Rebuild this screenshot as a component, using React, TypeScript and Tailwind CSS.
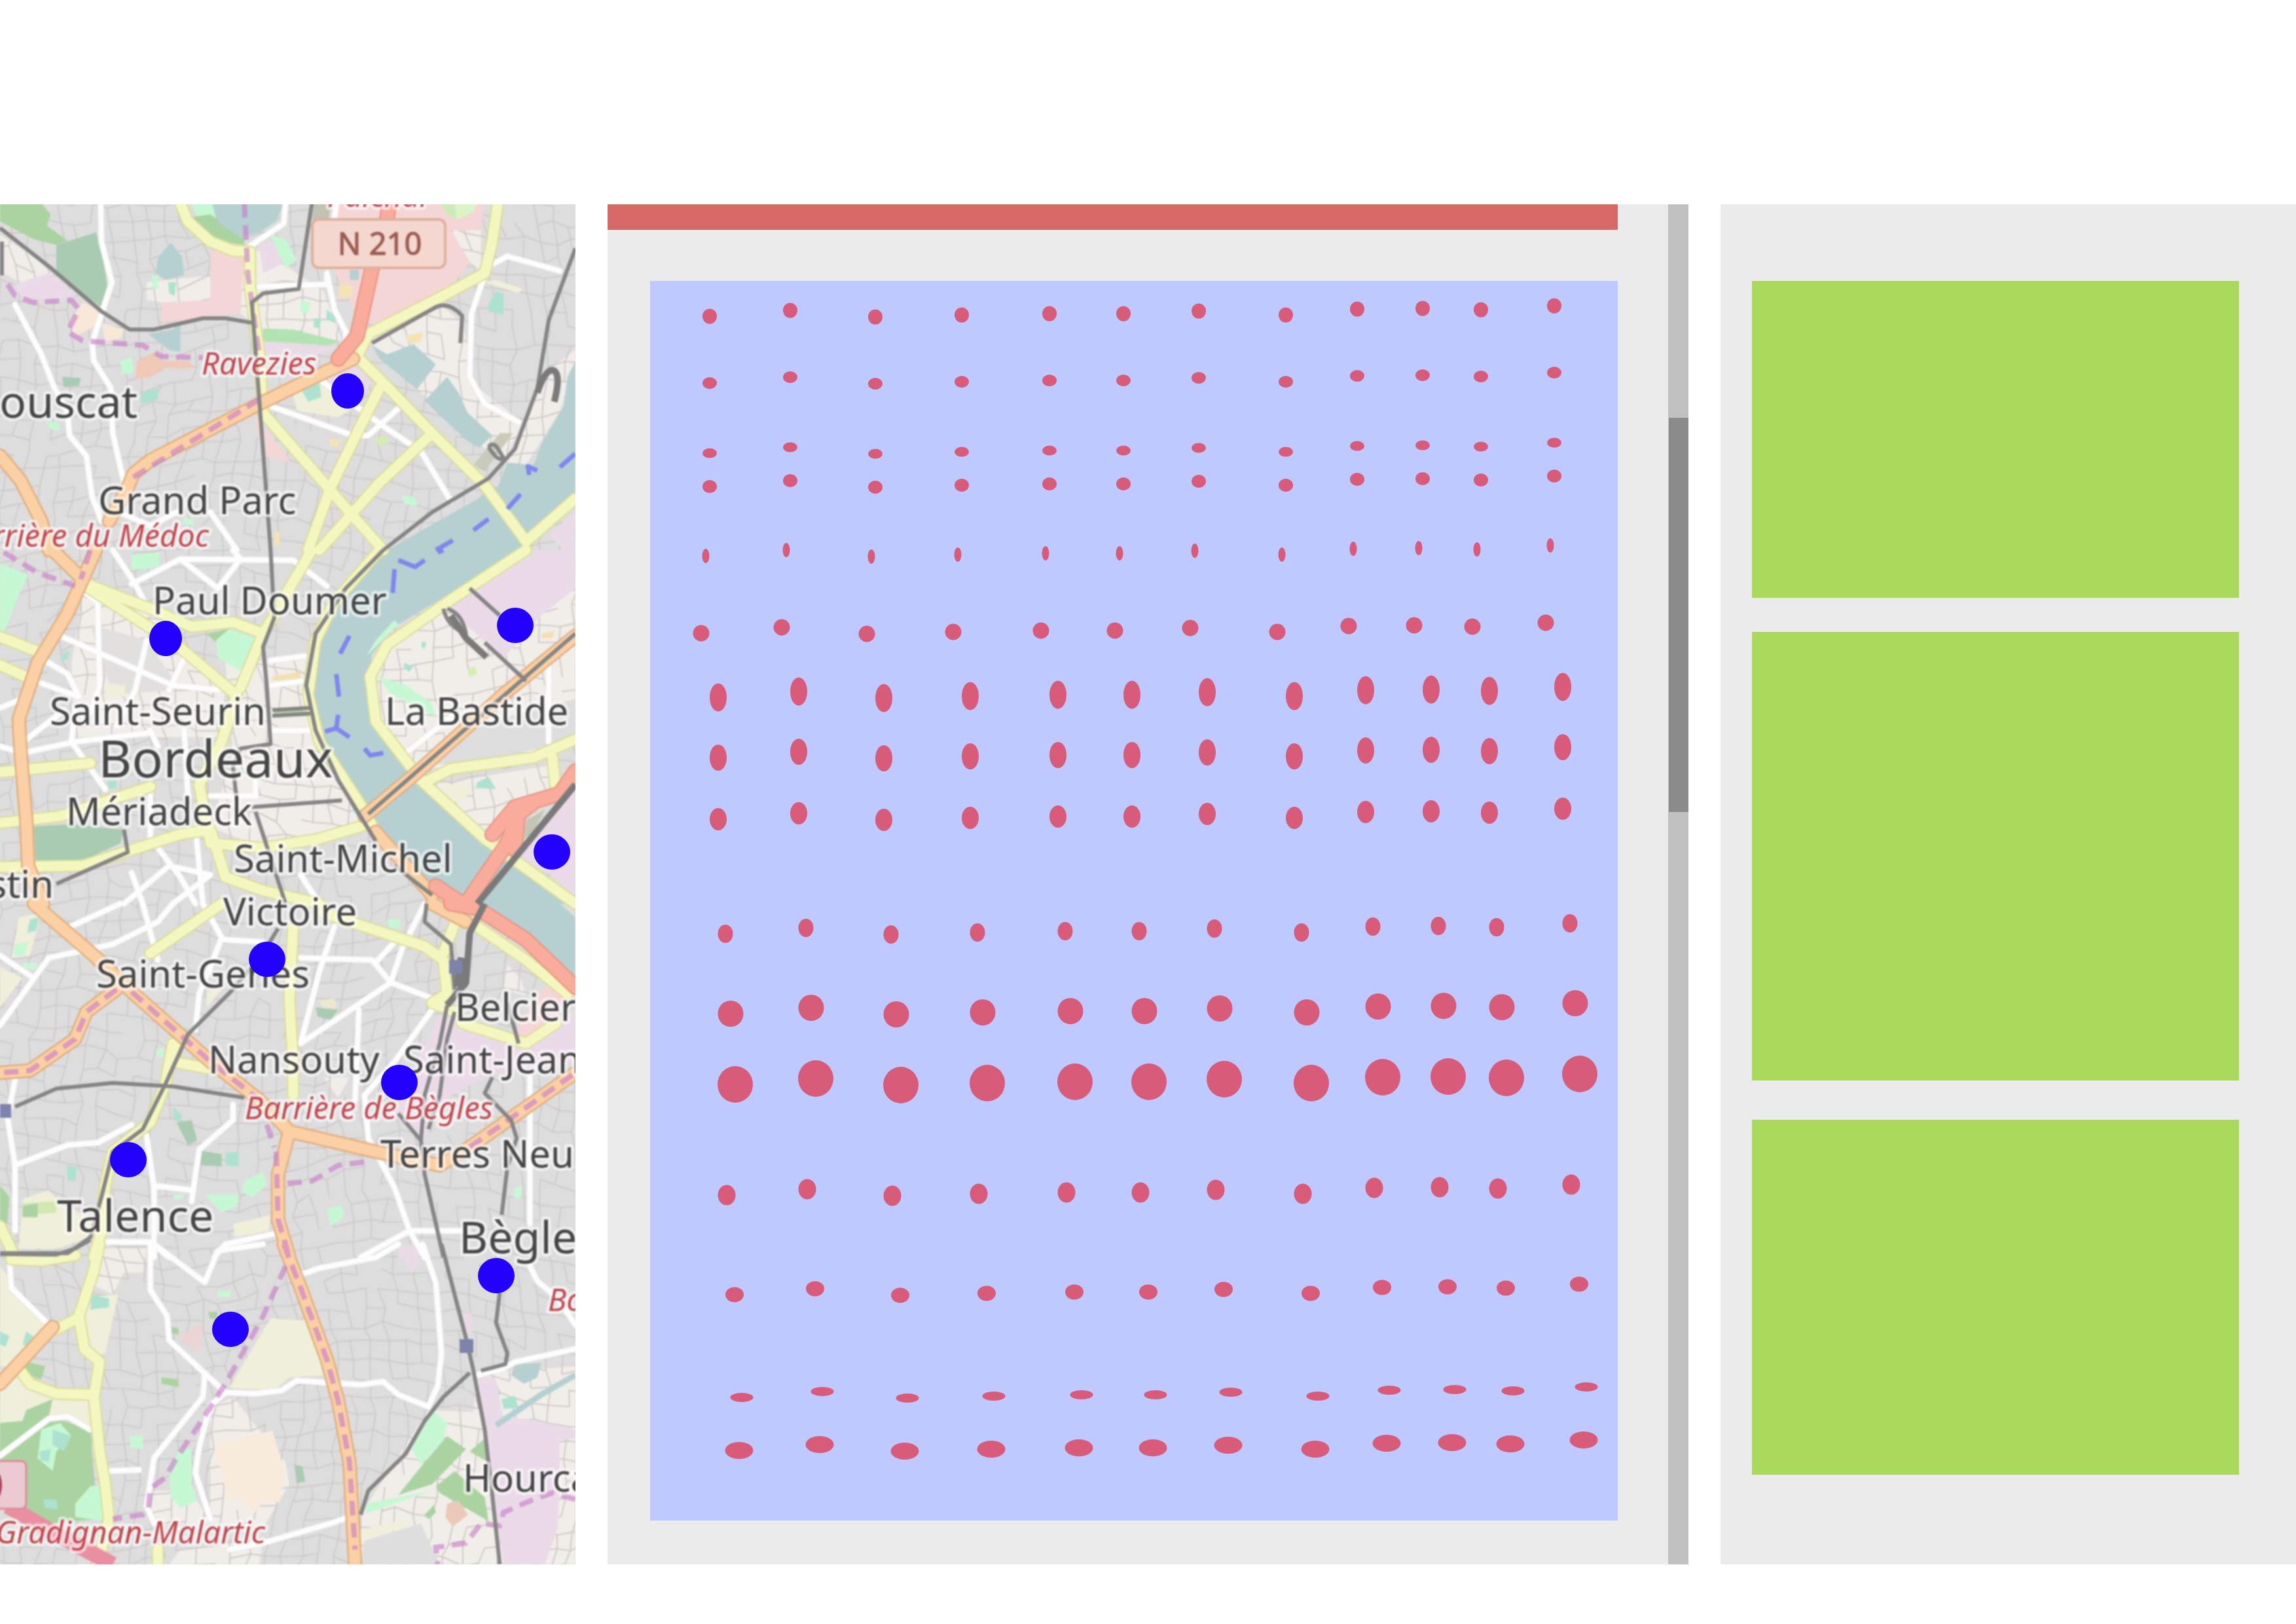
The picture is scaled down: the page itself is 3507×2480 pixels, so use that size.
import React from "react";

type Shape = { tile: number; fill: string; d: string };
type Line = { tile: number; d: string };

// The map is surveyed in four stacked sheets, each with its own grid.
const SHEETS = [
  { y: -12, sx: 0.57398, sy: 0.34439 },
  { y: 528, sx: 0.57398, sy: 0.34439 },
  { y: 1068, sx: 0.57398, sy: 0.34439 },
  { y: 1588, sx: 0.57398, sy: 0.3331 },
];

const project = (tile: number, d: string) => {
  const s = SHEETS[tile];
  return d.replace(/(-?\d+) (-?\d+)/g, (_, x, y) =>
    `${(Number(x) * s.sx).toFixed(1)} ${(Number(y) * s.sy + s.y).toFixed(1)}`,
  );
};

const WOOD = "#abd3a1";
const FOREST = "#a9cbb1";
const PARK = "#c7f8d4";
const WATER = "#b6d0d2";
const BEIGE = "#f1eee9";
const RAILYARD = "#ebdbe8";
const RETAIL = "#f5d6d6";
const FARM = "#efefda";
const TEAL = "#aee2d0";

const sheet = (tile: number, items: [string, string][]): Shape[] =>
  items.map(([fill, d]) => ({ tile, fill, d }));

const AREAS: Shape[] = [
  ...sheet(0, [
    [BEIGE, "M0 170L100 280L160 380L60 390L0 330Z"],
    [WOOD, "M0 30L110 30L135 80L125 130L180 195L150 215L90 190L0 110Z"],
    [FOREST, "M150 215L255 160L270 230L285 400L270 490L150 350Z"],
    [RAILYARD, "M40 390L130 340L190 420L200 450L60 460Z"],
    [BEIGE, "M390 380L560 350L640 240L700 240L860 420L910 640L700 590L640 520L390 460Z"],
    [PARK, "M510 30L570 30L600 130L650 190L590 200L540 150Z"],
    [WOOD, "M515 90L560 80L650 185L650 215L590 200L540 150Z"],
    [WATER, "M565 30L755 30L735 110L690 160L640 180L600 140L575 100Z"],
    [WATER, "M420 270L455 205L485 270L490 350L440 370L415 340Z"],
    [PARK, "M405 350L420 350L420 410L405 405Z"],
    [TEAL, "M447 380L468 380L465 440L450 430Z"],
    [RETAIL, "M880 30L1290 30L1280 150L1200 150L1250 290L1200 400L1000 560L960 560L890 330Z"],
    [BEIGE, "M1200 150L1280 150L1280 330L1250 290Z"],
    [RETAIL, "M560 240L650 240L640 520L430 560L430 470L560 460Z"],
    ["#cdebb8", "M1170 30L1210 30L1215 105L1190 80Z"],
    ["#dcf3c6", "M1210 30L1270 30L1260 70L1215 105Z"],
    ["#c0c3b2", "M835 30L880 30L875 100L830 130Z"],
    [RAILYARD, "M690 210L750 200L760 290L700 340Z"],
    [PARK, "M720 170L760 190L790 280L760 320Z"],
    [PARK, "M800 460L825 470L820 520L798 510Z"],
    [TEAL, "M835 540L855 540L850 585L835 580ZM870 500L895 540L890 560L868 545Z"],
    ["#f6e3b5", "M905 385L940 400L935 440L900 455Z"],
    [WATER, "M930 325L955 325L955 370L932 370Z"],
    ["#b3e3b3", "M700 585L780 590L900 640L880 660L700 640Z"],
    [RAILYARD, "M700 645L900 670L830 710L700 700Z"],
    [RAILYARD, "M860 760L930 740L990 820L960 900L880 830Z"],
    [BEIGE, "M980 640L1180 490L1230 560L1250 700L1250 820L1390 1000L1340 1180L1200 1000Z"],
    ["#f6e3b5", "M1080 620L1125 600L1120 645L1090 655Z"],
    [WATER, "M990 660L1030 700L1100 655L1160 745L1110 855L1010 720Z"],
    [WATER, "M1130 905L1190 800L1220 870L1245 960L1310 1060L1275 1115L1240 1080Z"],
    [BEIGE, "M1531 680L1531 760L1490 950L1430 1110L1400 1190L1350 1180L1400 1000L1430 850L1450 780Z"],
    [WATER, "M1531 730L1510 800L1500 930L1440 1100L1420 1190L1350 1180L1325 1290L1030 1568L1390 1568L1531 1320Z"],
    [RAILYARD, "M1531 1400L1460 1500L1500 1568L1531 1568Z"],
    ["#c9cbba", "M1330 1050L1365 1050L1290 1220L1260 1190Z"],
    [FARM, "M780 880L850 830L940 940L900 980L790 950Z"],
    [TEAL, "M800 850L850 830L855 890L820 910Z"],
    [TEAL, "M1300 480L1320 420L1340 430L1340 525L1300 510Z"],
    [FARM, "M1290 380L1320 370L1390 410L1380 430Z"],
    [TEAL, "M375 870L420 850L420 900L375 920Z"],
    [PARK, "M320 730L350 715L355 780L325 790ZM125 1000L155 1000L160 1040L130 1030Z"],
    [FOREST, "M165 800L215 805L210 840L170 845Z"],
    [RETAIL, "M675 960L775 1180L700 1150Z"],
    ["#f8e8d8", "M220 470L260 500L270 560L200 620L185 560ZM270 560L330 590L320 630L280 640Z"],
    ["#efc9b5", "M365 730L410 690L430 730L500 730L520 760L440 760L400 800L360 810Z"],
    [WATER, "M395 610L460 590L480 560L480 690L450 680Z"],
    ["#d3edb3", "M995 1070L1030 1065L1035 1090L1010 1110Z"],
    [PARK, "M1070 1325L1105 1335L1110 1375L1075 1360ZM485 1425L515 1430L515 1460L490 1455Z"],
    ["#f6e3b5", "M875 1075L910 1080L900 1110L878 1105ZM730 1490L745 1490L745 1540L730 1550Z"],
  ]),
  ...sheet(1, [
    [BEIGE, "M220 210L420 290L500 440L600 620L580 830L200 830L190 500Z"],
    [BEIGE, "M600 500L820 480L840 880L960 1200L700 1320L560 1230L620 900Z"],
    ["#e2e0df", "M240 330L390 400L480 620L300 640Z"],
    [BEIGE, "M1310 60L1390 0L1531 0L1531 840L1280 960L1110 970L1000 720L1000 500L1060 360Z"],
    ["#dedddd", "M1260 780L1531 660L1531 830L1280 950L1150 950Z"],
    [WATER, "M1010 0L1390 0L1050 340L990 460L980 600L1000 720L1070 950L1180 1150L1350 1340L1531 1540L1531 1568L1240 1568L1130 1480L960 1210L850 880L835 620L860 350L920 180Z"],
    [PARK, "M0 60L75 110L50 200L10 370L0 370Z"],
    [PARK, "M350 20L425 10L425 75L350 90Z"],
    [WOOD, "M550 370L610 350L600 410L575 410Z"],
    [PARK, "M575 400L610 350L680 390L640 535L580 480Z"],
    [FOREST, "M90 1225L190 1215L330 1240L320 1300L230 1370L95 1390Z"],
    [FARM, "M280 590L335 600L330 650L280 645Z"],
    [TEAL, "M165 460L185 445L180 485L160 490ZM285 1020L310 1020L310 1055L290 1060Z"],
    [RAILYARD, "M1280 130L1420 0L1531 0L1531 170L1440 290L1340 480L1190 260L1240 180Z"],
    [RAILYARD, "M1531 1000L1531 1540L1460 1430L1380 1370Z"],
    [BEIGE, "M1150 1040L1480 950L1460 1100L1350 1150L1300 1280L1200 1170Z"],
    [FARM, "M1180 1040L1250 1040L1240 1110L1200 1120Z"],
    [TEAL, "M1270 1030L1300 1005L1320 1060L1265 1055Z"],
    [PARK, "M1050 310L1060 330L1000 430L975 470L1000 400Z"],
    [PARK, "M1005 560L1080 600L1150 680L1160 740L1040 640Z"],
    ["#d3edb3", "M1245 530L1262 515L1270 545L1250 565Z"],
    [TEAL, "M1122 405L1135 410L1130 440L1122 430ZM1075 500L1100 515L1090 540L1075 525Z"],
    ["#f4dfb2", "M725 560L800 540L800 570L725 580ZM1440 370L1475 360L1470 390L1445 392Z"],
    ["#b9d9a8", "M730 712L815 712L815 728L730 728Z"],
    ["#c3c6b4", "M1400 1200L1450 1150L1420 1250L1395 1280Z"],
  ]),
  ...sheet(2, [
    [WATER, "M1270 0L1490 0L1531 60L1531 350L1400 150Z"],
    [RAILYARD, "M1170 490L1280 520L1400 640L1531 470L1531 700L1300 760L1200 850L1130 1040L1040 930L1110 700Z"],
    [RETAIL, "M1450 370L1520 410L1420 620L1370 590L1390 500Z"],
    [BEIGE, "M1350 270L1385 330L1400 410L1340 380ZM860 770L930 770L900 860Z"],
    [FARM, "M0 280L60 330L0 460ZM50 60L110 40L80 230L30 240ZM550 390L590 380L550 460Z"],
    [TEAL, "M80 70L105 60L95 120L72 130Z"],
    [PARK, "M40 180L75 170L65 230L35 230ZM60 260L100 265L95 290L65 290ZM1030 70L1065 70L1065 110L1035 105Z"],
    [FOREST, "M840 460L900 470L880 515L845 500Z"],
    ["#ece8d0", "M850 430L890 420L895 460L860 465Z"],
    [FOREST, "M470 970L510 960L525 1050L500 1070Z"],
    [TEAL, "M460 900L485 940L480 970L462 950Z"],
    [FOREST, "M530 1095L590 1110L590 1165L535 1160Z"],
    [TEAL, "M600 1105L635 1100L635 1165L600 1160ZM178 1160L205 1170L200 1230L180 1230Z"],
    [PARK, "M545 1290L635 1290L630 1340L590 1370Z"],
    [PARK, "M650 1230L700 1190L710 1250L670 1300L645 1280Z"],
    [PARK, "M870 1350L910 1340L915 1390L880 1430ZM1370 1260L1390 1250L1385 1310L1365 1300Z"],
    [PARK, "M415 650L435 640L435 680L418 680ZM460 1290L490 1290L485 1310L465 1310Z"],
    [FARM, "M60 1310L130 1270L160 1330L250 1400L240 1480L150 1530L50 1530Z"],
    ["#d2e8b0", "M60 1330L150 1320L150 1370L60 1380Z"],
    [WOOD, "M60 1340L100 1330L100 1390L60 1390ZM0 1250L25 1300L20 1420L0 1400Z"],
    [FARM, "M620 1420L720 1380L715 1450L625 1480Z"],
    [RAILYARD, "M1060 1530L1100 1510L1115 1568L1060 1568Z"],
  ]),
  ...sheet(3, [
    [FARM, "M0 100L130 390L30 560L0 560Z"],
    [BEIGE, "M280 20L390 20L380 130L330 130L300 230L250 190Z"],
    [FARM, "M250 240L315 230L280 500L230 520L220 330Z"],
    [TEAL, "M245 230L290 250L290 290L240 300ZM0 400L25 420L15 470L0 460ZM70 400L95 430L80 470L60 460Z"],
    [FARM, "M0 590L240 700L240 840L150 790L0 950Z"],
    [WOOD, "M50 530L120 560L110 620L60 590Z"],
    [FARM, "M720 340L820 350L880 600L770 610L730 670L610 660L650 540Z"],
    [WOOD, "M0 820L60 810L70 760L140 710L130 790L240 850L260 1260L130 1280L0 1200Z"],
    [PARK, "M110 850L160 820L190 880L150 950L140 1040L100 980Z"],
    [TEAL, "M140 850L190 880L170 950L140 920ZM105 950L135 940L130 1000L108 990ZM115 1170L150 1170L155 1215L120 1210Z"],
    [PARK, "M240 1110L280 1100L280 1270L200 1250L200 1190Z"],
    [BEIGE, "M400 1130L450 1130L480 1210L525 1175L560 1280L400 1290Z"],
    [BEIGE, "M560 750L620 700L680 830L760 1000L770 1100L700 1300L560 1280Z"],
    ["#f9ebdc", "M570 920L725 855L760 1050L745 1180L700 1180L680 1230L640 1170L605 1160Z"],
    [PARK, "M480 935L510 940L510 1100L525 1175L480 1210L455 1160L450 1030Z"],
    ["#ecd4d4", "M470 430L540 360L530 490Z"],
    [WOOD, "M430 610L475 620L475 655L430 640ZM555 310L580 310L575 345L558 340ZM457 380L475 385L475 415L457 410Z"],
    [PARK, "M345 880L380 875L380 940L348 935ZM580 215L615 215L610 245L580 240Z"],
    [FOREST, "M785 1010L805 1020L812 1090L790 1095Z"],
    [RAILYARD, "M1060 20L1115 10L1115 90L1095 135ZM1230 310L1255 320L1255 420L1235 400Z"],
    [BEIGE, "M1270 590L1531 560L1531 1468L960 1468L960 1240L1140 760L1260 770Z"],
    ["#dedede", "M970 1360L1120 1280L1170 1468L960 1468Z"],
    [FARM, "M960 1310L1080 1260L1080 1300L960 1350Z"],
    [PARK, "M1150 760L1190 820L1180 900L1120 1010L1095 940Z"],
    [WOOD, "M1190 880L1240 940L1150 1100L1060 1150L1130 1000Z"],
    [WOOD, "M1160 1110L1210 1040L1290 1160L1300 1270L1240 1210L1170 1140ZM1250 950L1290 890L1300 1000ZM1130 1240L1155 1195L1160 1230L1140 1260Z"],
    [PARK, "M970 1190L1150 1130L1050 1190L975 1235Z"],
    [RAILYARD, "M1270 590L1320 620L1340 800L1400 800L1531 850L1531 890L1490 900L1485 1300L1450 1468L1340 1468L1300 1000Z"],
    ["#ebc9b9", "M1190 1190L1220 1175L1245 1240L1205 1295L1185 1250Z"],
    [WATER, "M1370 550L1440 545L1430 610L1395 640L1360 600Z"],
    [TEAL, "M1335 710L1370 695L1380 750L1340 755Z"],
    [BEIGE, "M480 1400L700 1350L690 1468L450 1468Z"],
  ]),
];

const lines = (...perSheet: string[][]): Line[] =>
  perSheet.flatMap((ds, tile) => ds.map((d) => ({ tile, d })));

const STREETS = lines(
  [
    "M268 30L270 200L298 380L245 650L250 730L295 850L300 1050L330 1270",
    "M40 480L110 700L145 850L180 960L185 1060L230 1150L245 1330L270 1440",
    "M760 30L755 120L665 220",
    "M690 400L870 390L870 340L890 500L920 600L920 640",
    "M895 30L890 100",
    "M720 930L940 1060L980 1060L1060 940",
    "M840 800L1030 1030L1120 1130L1200 1350",
    "M1300 310L1350 265L1490 330",
    "M1285 370L1255 520L1250 800L1290 920L1380 1000",
    "M560 1400L630 1568",
    "M330 1410L400 1460L470 1400",
  ],
  [
    "M300 0L360 150L400 280",
    "M350 150L480 40L780 45L870 160",
    "M480 40L580 170L640 40L620 0",
    "M220 180L260 230L265 600L240 720",
    "M160 380L460 600L580 620",
    "M120 490L180 550L210 650L110 590",
    "M0 700L60 660",
    "M70 840L170 710",
    "M60 900L200 850L400 810",
    "M390 400L360 620L310 780",
    "M490 480L450 620",
    "M0 870L60 900",
    "M200 700L190 850L280 1060",
    "M400 800L420 870M490 800L500 1090",
    "M720 490L810 470M720 600L810 580M720 800L830 800",
    "M1080 900L1200 740",
    "M1460 500L1460 850",
    "M560 1090L680 1090L680 1030",
    "M400 1030L400 1280",
    "M420 1320L480 1450L520 1568",
    "M520 1230L540 1568",
    "M330 1568L450 1400L560 1440L460 1568",
    "M800 1440L850 1568",
    "M350 1430L380 1568",
  ],
  [
    "M460 0L420 80L300 180L130 240L0 540",
    "M320 0L190 100",
    "M380 0L420 250",
    "M0 230L90 330",
    "M540 0L590 150L560 280L530 400L520 560",
    "M600 160L700 170",
    "M800 240L990 250L1040 350L800 620",
    "M1040 350L1150 420",
    "M890 100L850 300L800 620",
    "M1050 170L1000 260",
    "M1130 0L1070 200L1040 350",
    "M1150 470L1050 700L970 850L980 1040L1050 1260L1090 1450L1230 1450",
    "M955 470L945 870",
    "M40 780L20 950L40 1160L40 1450",
    "M40 1160L180 1070L260 1060L350 980",
    "M620 890L620 960L530 1090L510 1320",
    "M390 1030L410 1260L410 1568",
    "M410 1250L510 1270",
    "M1410 770L1410 1420",
    "M280 1500L400 1500L450 1568",
    "M570 1568L600 1510L740 1460",
    "M960 1568L1090 1450L1130 1568",
  ],
  [
    "M25 60L30 200L130 370",
    "M410 0L545 175L580 30L700 0",
    "M400 0L400 210L445 330L450 440L600 680L680 685L750 670L790 625L960 645L1020 630L1060 690L1140 745",
    "M800 140L850 110L1000 60L1060 0",
    "M1125 0L1160 180L1175 500L1165 650L1140 745",
    "M545 590L540 700L410 980L390 1200L410 1280",
    "M600 680L560 740L530 930L520 1050L560 1260",
    "M0 970L130 800L180 790L240 850",
    "M280 1040L370 1035",
    "M610 1400L700 1370L880 1280L930 1250",
    "M1270 600L1340 570L1370 540L1531 480",
    "M1410 100L1430 170L1480 240L1531 370",
  ],
);

const AVENUES = lines(
  [
    "M480 30L500 110L560 200L620 240L665 245L665 400L690 700L700 960",
    "M700 960L930 1400L1020 1568",
    "M1325 30L1310 200L1290 340L1180 440L980 610L950 710",
    "M950 710L1040 860L1150 1050L1290 1280L1400 1530",
    "M1010 850L950 1050L880 1290L820 1568",
    "M1150 1050L1010 1270L850 1568",
    "M1531 1340L1400 1530",
  ],
  [
    "M0 385L100 450M0 510L80 570",
    "M220 150L330 270L470 420L620 630",
    "M230 150L400 260L510 340L620 320L700 370L640 610",
    "M830 0L770 170L730 290L700 370",
    "M1010 0L890 230L840 400L820 640L850 850L960 1130L990 1220",
    "M1400 0L1200 220L1030 420L985 560L1000 760L1120 1020L1290 1280L1531 1568",
    "M1130 1030L1200 970L1420 920L1531 840",
    "M1470 920L1480 1080",
    "M0 985L240 945",
    "M0 1210L160 1180L400 1050",
    "M0 1405L220 1400L480 1260L560 1240L600 1450L700 1510L850 1568",
    "M590 850L530 1040L560 1300L700 1320L850 1280L970 1220",
    "M630 640L590 850",
  ],
  [
    "M590 0L400 220",
    "M780 110L770 430L780 700L780 850",
    "M860 40L1130 190L1180 250L1190 400L1150 440L1210 480",
    "M1210 90L1180 220",
    "M1260 90L1400 250L1510 400",
    "M1230 530L1400 620L1480 530",
    "M480 600L460 700L550 730",
    "M460 620L440 800L400 970L300 1100L280 1250L270 1450L250 1568",
    "M0 1430L40 1568",
  ],
  [
    "M265 0L250 120L210 330L225 480L265 540L250 700L265 950L280 1100L290 1260L260 1468",
    "M205 340L150 390",
    "M50 570L80 640L150 685L250 690",
    "M30 70L110 75L200 50",
    "M420 1400L420 1468",
  ],
);

const BOULEVARDS = lines(
  [
    "M940 720L850 790L690 920L400 1170L355 1230L340 1290L290 1440",
    "M0 1150L55 1260L110 1440L130 1568",
  ],
  [
    "M140 0L220 130L180 280L100 500L50 750L55 900L70 1200L75 1400L115 1568",
    "M255 0L220 130",
    "M1531 380L1340 640L1100 1000L970 1180",
    "M1000 1250L1150 1530",
  ],
  [
    "M90 0L250 230L350 390L560 700L690 870L770 1010L740 1200L740 1400L770 1568",
    "M310 380L230 480L200 600L80 740L0 750",
    "M770 1010L1000 1100L1170 1160L1250 1080L1531 750",
    "M1150 0L1240 80",
  ],
  ["M140 380L70 510L0 640", "M755 0L800 200L870 530L900 720L930 1000L945 1468"],
);

const TRUNKS = lines(
  ["M1035 30L1030 100L990 320L950 620L900 720"],
  [
    "M1531 980L1490 1080L1370 1140L1310 1260",
    "M1420 1120L1380 1170L1350 1300L1240 1568",
    "M1160 1490L1230 1568",
    "M1380 1150L1370 1330",
  ],
  ["M1200 0L1270 20L1400 160L1531 370"],
);

const RAILS = lines(
  [
    "M0 140L130 310L270 510L345 590L410 590L540 540L600 540L670 560",
    "M830 30L795 410L700 430L670 470L690 900L720 1568",
    "M1531 230L1460 550L1430 850L1370 1120L1300 1250L1150 1400L1020 1568",
    "M990 650L1150 500Q1190 455 1230 530L1225 650",
    "M1300 1110Q1310 1090 1322 1110L1340 1160Q1325 1180 1300 1110",
    "M5 200L5 350",
  ],
  [
    "M720 0L730 300L700 430L710 600L720 860L640 880L620 960L630 1110",
    "M1020 0L920 170L840 370L815 600L840 800L900 1020L1000 1290",
    "M725 710L825 700M725 735L825 725",
    "M670 1140L910 1110",
    "M680 1160L760 1568",
    "M1250 170L1330 290",
    "M1290 410L1400 580",
    "M1180 260Q1190 340 1240 370Q1230 280 1190 260",
    "M1531 370L1310 690L980 1170",
    "M150 1480L340 1340L330 1240",
    "M1050 1400L1150 1530",
  ],
  [
    "M740 110L700 220L620 380L500 580L440 800L380 1000L300 1100L270 1300L240 1480L180 1550L0 1550",
    "M40 900L150 820L300 795L460 810L650 860",
    "M1190 450L1170 620L1130 850L1120 1050L1130 1200L1160 1420L1180 1568",
    "M1210 480L1190 600L1170 850L1140 1000",
    "M1135 0L1130 80L1200 180L1210 380",
    "M1310 770L1290 840L1360 960L1375 1040L1350 1170L1335 1380",
    "M1350 440L1380 620",
    "M1060 930L1120 1050",
  ],
  [
    "M1175 0L1240 430L1260 580L1290 850L1310 1150L1330 1468",
    "M1330 220L1320 360L1350 500L1345 550L1280 580",
    "M1250 590L1180 700L1130 810L1080 960L980 1130L960 1240",
    "M0 45L150 48L200 20L240 -20",
  ],
);

const MAIN_RAILS = lines(
  ["M1430 870Q1450 770 1470 770Q1495 780 1475 910"],
  ["M1200 290L1240 390L1295 475", "M1531 1040L1270 1568"],
  ["M1290 0L1250 130L1240 350L1190 450"],
);

const YARDS = lines([], [], ["M1235 240L1225 370"]);

const BORDERS = lines(
  [
    "M20 390L40 440L90 470L190 460L210 500L180 600L220 640L380 660L430 710L540 715",
    "M650 30L660 350L690 700",
    "M690 900L350 1250",
  ],
  ["M10 10L100 100L200 160", "M240 0L215 130"],
  [
    "M710 980L730 1080",
    "M765 1240L830 1230L900 1160L970 1145",
    "M310 380L230 480L200 600L80 740L0 750",
    "M350 390L560 700L690 870",
    "M735 1100L740 1400L770 1568",
    "M1250 1080L1531 750",
  ],
  [
    "M760 100L700 330L600 640L540 800L470 980L440 1070L400 1120L395 1210L380 1240L300 1260",
    "M755 0L800 200L870 530L900 720L930 1000L945 1400",
    "M1531 1170L1470 1140L1420 1170L1340 1230L1330 1290L1280 1280L1240 1370L1160 1390L1165 1468",
  ],
);

const FERRIES = lines(
  ["M1531 1140L1490 1200", "M1400 1195L1430 1215M1405 1190L1408 1235", "M1385 1320L1350 1385", "M1300 1430L1260 1480", "M1205 1525L1160 1568"],
  [
    "M1180 0L1165 10M1130 45L1105 75L1060 45M1050 85L1045 190",
    "M930 380L905 460M895 550L902 650M900 730L895 790L930 830",
    "M895 790L865 805",
    "M970 880L985 910L1020 900",
  ],
);

// Back-street mesh: a jittered lattice, reproducible between renders.
const mesh = (() => {
  let seed = 7;
  const rnd = () => {
    seed = (seed * 16807) % 2147483647;
    return seed / 2147483647;
  };
  const nx = 36;
  const ny = 82;
  const pts = Array.from({ length: ny }, (_, j) =>
    Array.from({ length: nx }, (_, i) => {
      const x = i * 27 - 20;
      const y = j * 27 - 20;
      return [
        x + Math.sin(y / 130) * 22 + (rnd() - 0.5) * 12,
        y + Math.sin(x / 110 + y / 300) * 24 + (rnd() - 0.5) * 12,
      ];
    }),
  );
  let d = "";
  for (let j = 0; j < ny - 1; j++)
    for (let i = 0; i < nx - 1; i++) {
      const p = pts[j][i].map(Math.round).join(" ");
      if (rnd() < 0.75) d += `M${p}L${pts[j][i + 1].map(Math.round).join(" ")}`;
      if (rnd() < 0.75) d += `M${p}L${pts[j + 1][i].map(Math.round).join(" ")}`;
    }
  return d;
})();

const join = (ls: Line[]) => ls.map((l) => project(l.tile, l.d)).join("");

function Road({ data, width, casing, color, edge }: { data: Line[]; width: number; casing: number; color: string; edge: string }) {
  const d = join(data);
  return (
    <g fill="none" strokeLinejoin="round" strokeLinecap="round">
      <path d={d} stroke={edge} strokeWidth={casing} />
      <path d={d} stroke={color} strokeWidth={width} />
    </g>
  );
}

type Label = { text: string; x: number; y: number; size: number; end?: boolean };

const PLACES: Label[] = [
  { text: "ouscat", x: -1, y: 326, size: 68 },
  { text: "Grand Parc", x: 150, y: 473, size: 58 },
  { text: "Paul Doumer", x: 233, y: 626, size: 58 },
  { text: "Saint-Seurin", x: 76, y: 795, size: 58 },
  { text: "La Bastide", x: 588, y: 795, size: 58 },
  { text: "Bordeaux", x: 150, y: 875, size: 79 },
  { text: "Mériadeck", x: 101, y: 948, size: 58 },
  { text: "Saint-Michel", x: 357, y: 1020, size: 58 },
  { text: "stin", x: 82, y: 1059, size: 58, end: true },
  { text: "Victoire", x: 341, y: 1101, size: 58 },
  { text: "Saint-Genès", x: 147, y: 1196, size: 58 },
  { text: "Belcier", x: 695, y: 1247, size: 58 },
  { text: "Nansouty", x: 318, y: 1327, size: 58 },
  { text: "Saint-Jean", x: 616, y: 1327, size: 58 },
  { text: "Terres Neu", x: 581, y: 1471, size: 58 },
  { text: "Talence", x: 87, y: 1569, size: 68 },
  { text: "Bègle", x: 701, y: 1602, size: 68 },
  { text: "Hourca", x: 707, y: 1966, size: 58 },
];

const STOPS: Label[] = [
  { text: "Palchal", x: 500, y: 4, size: 47 },
  { text: "Ravezies", x: 308, y: 260, size: 47 },
  { text: "rrière du Médoc", x: 319, y: 523, size: 47, end: true },
  { text: "Barrière de Bègles", x: 374, y: 1397, size: 47 },
  { text: "Bo", x: 837, y: 1690, size: 47 },
  { text: "Gradignan-Malartic", x: 405, y: 2045, size: 47, end: true },
];

const PINS = [
  [531, 285, 25],
  [253, 663, 25],
  [787, 643, 28],
  [843, 989, 28],
  [408, 1153, 28],
  [610, 1341, 28],
  [196, 1459, 28],
  [758, 1636, 28],
  [352, 1718, 28],
];

function Labels({ items, color, italic }: { items: Label[]; color: string; italic?: boolean }) {
  return (
    <g
      fill={color}
      fontFamily='"Noto Sans", sans-serif'
      fontStyle={italic ? "italic" : "normal"}
      stroke="#ffffff"
      strokeOpacity="0.6"
      strokeWidth="9"
      strokeLinejoin="round"
      paintOrder="stroke"
    >
      {items.map((l) => (
        <text key={l.text} x={l.x} y={l.y} fontSize={l.size} textAnchor={l.end ? "end" : "start"}>
          {l.text}
        </text>
      ))}
    </g>
  );
}

function CityMap() {
  return (
    <svg viewBox="0 0 879 2077" className="block h-auto w-full overflow-hidden" role="img" aria-label="Bordeaux">
      <g className="blur-[1px]">
        <rect x="-10" y="-10" width="899" height="2097" fill="#dedddd" />
        {AREAS.filter((a) => a.fill === BEIGE).map((a, i) => (
          <path key={i} d={project(a.tile, a.d)} fill={a.fill} />
        ))}
        <path d={mesh} fill="none" stroke="#cfcaca" strokeWidth="2" />
        {AREAS.filter((a) => a.fill !== BEIGE).map((a, i) => (
          <path key={i} d={project(a.tile, a.d)} fill={a.fill} />
        ))}
        <path d={project(3, "M1531 600L1440 690L1320 830")} fill="none" stroke="#b6d0d2" strokeWidth="9" />
        <Road data={STREETS} width={8} casing={10} color="#fdfdfd" edge="#e9e7e7" />
        <Road data={AVENUES} width={15} casing={19} color="#f5f7c1" edge="#dadc98" />
        <Road data={BOULEVARDS} width={17} casing={22} color="#fbd0a4" edge="#dfae80" />
        <Road data={TRUNKS} width={20} casing={24} color="#f9ac9c" edge="#e8917f" />
        <path d={project(3, "M20 1200L130 1310L300 1468")} fill="none" stroke="#ea8fa2" strokeWidth="24" />
        <path d={join(BORDERS)} fill="none" stroke="#c678c8" strokeOpacity="0.6" strokeWidth="8" strokeDasharray="22 12" />
        <g fill="none" strokeLinejoin="round">
          <path d={join(RAILS)} stroke="#858585" strokeWidth="6" />
          <path d={join(MAIN_RAILS)} stroke="#7a7a7a" strokeWidth="10" />
          <path d={join(YARDS)} stroke="#7a7a7a" strokeWidth="20" />
        </g>
        <path d={join(FERRIES)} fill="none" stroke="#7f86ee" strokeWidth="7" />
        <g fill="#7e83ac">
          <rect x="686" y="1154" width="20" height="21" />
          <rect x="0" y="1374" width="17" height="21" />
          <rect x="702" y="1733" width="21" height="21" />
        </g>
        <rect x="477" y="23" width="203" height="74" rx="10" fill="#f4d7cf" stroke="#dfb09c" strokeWidth="4" />
        <text x="580" y="77" textAnchor="middle" fontFamily='"Noto Sans", sans-serif' fontSize="47" fill="#9a5a52" stroke="#9a5a52">
          N 210
        </text>
        <rect x="-60" y="1919" width="100" height="73" rx="8" fill="#eccad2" stroke="#e0899c" strokeWidth="3" />
        <path d="M-2 1940Q4 1956 -2 1972" fill="none" stroke="#a83a55" strokeWidth="4" />
        <Labels items={PLACES} color="#454545" />
        <Labels items={STOPS} color="#c1454d" italic />
      </g>
      {PINS.map(([x, y, rx]) => (
        <ellipse key={`${x}-${y}`} cx={x} cy={y} rx={rx} ry="27" fill="#2400ff" />
      ))}
    </svg>
  );
}

// Column offsets from the first dot of every row.
const COLS = [
  [0, 0], [123, -9], [253, 1], [385, -2], [519, -4], [632, -4],
  [747, -8], [880, -2], [989, -11], [1089, -12], [1178, -10], [1290, -16],
];

// First dot of every row: cx, cy, rx, ry.
const ROWS = [
  [91, 54, 11, 11.5], [91, 156, 11, 9], [91, 263, 11, 7.5], [91, 314, 11, 10],
  [85, 420, 5.5, 11], [78, 538, 12.5, 12.5], [104, 636, 13, 21.5], [104, 728, 13, 20],
  [104, 822, 13, 17], [115, 997, 11.5, 14], [123, 1119, 19.5, 20], [130, 1227, 27, 28],
  [117, 1396, 13.5, 15.5], [129, 1548, 14, 11.5], [140, 1705, 17.5, 7], [136, 1786, 21.5, 13],
];

function DotPlot() {
  return (
    <svg viewBox="0 0 1478 1893" className="block h-auto w-full bg-[#bdc9ff]" role="img" aria-label="Dot matrix">
      <g fill="#d85b7a">
        {ROWS.map(([cx, cy, rx, ry]) =>
          COLS.map(([dx, dy]) => (
            <ellipse key={`${cy}-${dx}`} cx={cx + dx} cy={cy + dy} rx={rx} ry={ry} />
          )),
        )}
      </g>
    </svg>
  );
}

export default function App() {
  return (
    <main className="grid grid-cols-[879fr_1651fr_879fr] gap-[49px] overflow-hidden bg-white pt-[312px] pb-[91px]">
      <section>
        <CityMap />
      </section>
      <section className="flex bg-[#ebebeb]">
        <div className="flex flex-1 flex-col gap-[78px] pr-[77px] pb-[67px]">
          <div className="h-[39px] bg-[#d66866]" />
          <div className="pl-[65px]">
            <DotPlot />
          </div>
        </div>
        <div className="w-[31px] bg-[#c1c1c1] pt-[326px] pl-px">
          <div className="h-[602px] bg-[#8b8b8b]" />
        </div>
      </section>
      <section className="flex flex-col bg-[#ebebeb] pt-[117px] pr-[87px] pl-[48px]">
        <div className="mb-[52px] h-[484px] bg-[#a9d85b]" />
        <div className="mb-[60px] h-[685px] bg-[#a9d85b]" />
        <div className="h-[542px] bg-[#a9d85b]" />
      </section>
    </main>
  );
}
